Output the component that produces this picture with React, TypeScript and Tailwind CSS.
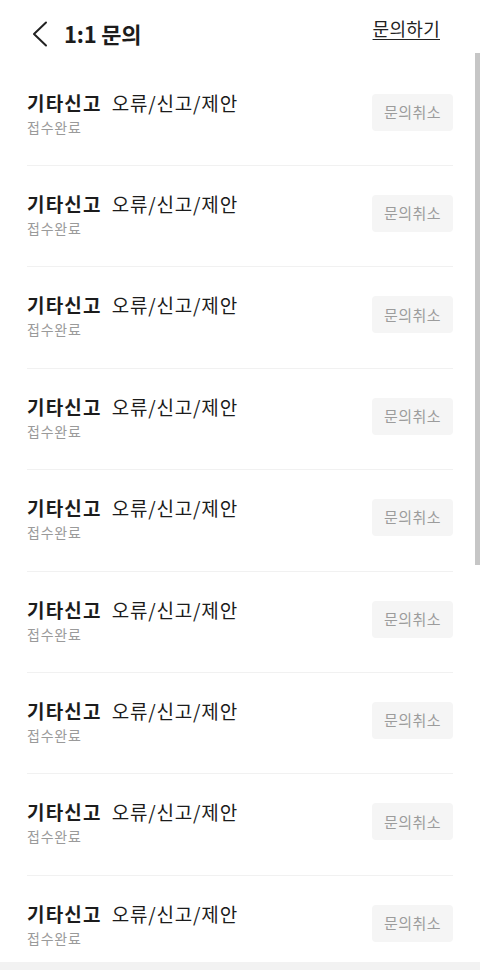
const rows = Array.from({ length: 9 }, (_, i) => i);

function InquiryRow() {
  return (
    <div className="h-[101.4px] px-[27px]">
      <div className="flex h-full items-start justify-between border-b border-[#f1f1f1] pt-[26px]">
        <div className="flex flex-col">
          <p className="text-[19px] leading-[24px] text-[#1c1c1c]">
            <span className="font-bold tracking-[1.2px]">기타신고</span>
            <span className="ml-[10px] tracking-[0.8px]">오류/신고/제안</span>
          </p>
          <p className="mt-[2px] text-[14px] leading-[20px] tracking-[0.8px] text-[#9a9a9a]">접수완료</p>
        </div>
        <button className="mt-[3px] h-[37px] w-[81px] rounded-[4px] bg-[#f5f5f5] text-[15px] tracking-[0.5px] text-[#9c9c9c]">
          문의취소
        </button>
      </div>
    </div>
  );
}

export default function App() {
  return (
    <div
      className="flex h-[970px] w-[480px] flex-col overflow-hidden bg-white"
      style={{ fontFamily: '"Noto Sans CJK KR", "Noto Sans", sans-serif' }}
    >
      <header className="flex h-[53px] shrink-0 items-center justify-between pl-[32px] pr-[40px] pt-[14px]">
        <div className="flex items-center gap-[16px]">
          <svg width="16" height="26" viewBox="0 0 16 26" fill="none">
            <polyline points="14,1.5 2,13 14,24.5" stroke="#222" strokeWidth="2" strokeLinecap="round" strokeLinejoin="round" />
          </svg>
          <h1 className="text-[22px] font-bold tracking-[-0.2px] text-[#1c1c1c]">1:1 문의</h1>
        </div>
        <a className="-mt-[11px] text-[18px] tracking-[0.3px] text-[#222] underline underline-offset-[3px]">문의하기</a>
      </header>

      <div className="relative flex-1 overflow-hidden pt-[11.6px]">
        {rows.map((i) => (
          <InquiryRow key={i} />
        ))}
        <div className="absolute right-0 top-0 h-[512px] w-[5px] bg-[#c6c6c6]" />
      </div>

      <div className="h-[8px] shrink-0 bg-[#f2f2f2]" />
    </div>
  );
}
